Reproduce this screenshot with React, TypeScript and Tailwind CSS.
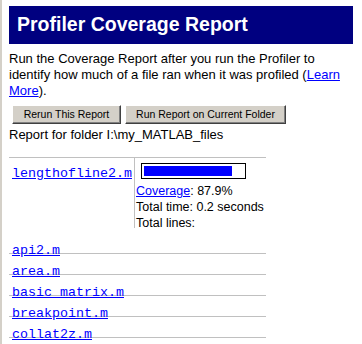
import React from 'react';

const files = ['api2.m', 'area.m', 'basic matrix.m', 'breakpoint.m', 'collat2z.m'];

const mono = { fontFamily: '"Liberation Mono", "Courier New", monospace' };

const Button: React.FC<{ label: string; width: string }> = ({ label, width }) => (
  <button
    className={`${width} h-[19px] bg-[#d4d0c8] text-[10.5px] leading-none text-black border border-t-white border-l-white border-r-[#404040] border-b-[#404040] shadow-[inset_-1px_-1px_0_#808080]`}
  >
    {label}
  </button>
);

const App: React.FC = () => {
  return (
    <div
      className="w-[362px] h-[344px] bg-white border-l-2 border-[#d4d0c8] overflow-hidden text-black"
      style={{ fontFamily: '"Liberation Sans", Arial, sans-serif' }}
    >
      <div className="pl-[7px] pr-[9px] pt-[6px]">
        <div className="h-[38px] bg-[#000080] flex items-center pl-[8px]">
          <h1 className="text-white font-bold text-[19.5px] leading-none">Profiler Coverage Report</h1>
        </div>

        <p className="mt-[7px] text-[13px] leading-[16px]">
          Run the Coverage Report after you run the Profiler to identify how much of a file ran when it was profiled (
          <a href="#" className="text-[#0000ff] underline">Learn More</a>).
        </p>

        <div className="flex gap-[4px] mt-[6px] pl-[3px]">
          <Button label="Rerun This Report" width="w-[109px]" />
          <Button label="Run Report on Current Folder" width="w-[161px]" />
        </div>

        <p className="mt-[3px] text-[13px] leading-[16px]">Report for folder I:\my_MATLAB_files</p>

        <div className="mt-[14px] w-[257px] border-t border-[#c0c0c0]">
          <div className="flex h-[75px]">
            <div className="w-[125px] pl-[3px] pt-[2px]">
              <a href="#" className="text-[#0000ff] underline text-[13.33px] leading-[16px]" style={mono}>
                lengthofline2.m
              </a>
            </div>
            <div className="h-[70px] border-l border-[#c0c0c0] pl-[1px] pt-[5px]">
              <div className="ml-[5px] w-[105px] h-[16px] border border-black p-[2px]">
                <div className="w-[88px] h-full bg-[#0000ff]" />
              </div>
              <div className="mt-[4px] text-[12.5px] leading-[16px]">
                <div>
                  <a href="#" className="text-[#0000ff] underline">Coverage</a>: 87.9%
                </div>
                <div>Total time: 0.2 seconds</div>
                <div>Total lines:</div>
              </div>
            </div>
          </div>

          {files.map((f) => (
            <div key={f} className="h-[21px] border-b border-[#c0c0c0] pl-[3px] pt-[4px]">
              <a href="#" className="text-[#0000ff] underline text-[13.33px] leading-[16px]" style={mono}>
                {f}
              </a>
            </div>
          ))}
        </div>
      </div>
    </div>
  );
};

export default App;
